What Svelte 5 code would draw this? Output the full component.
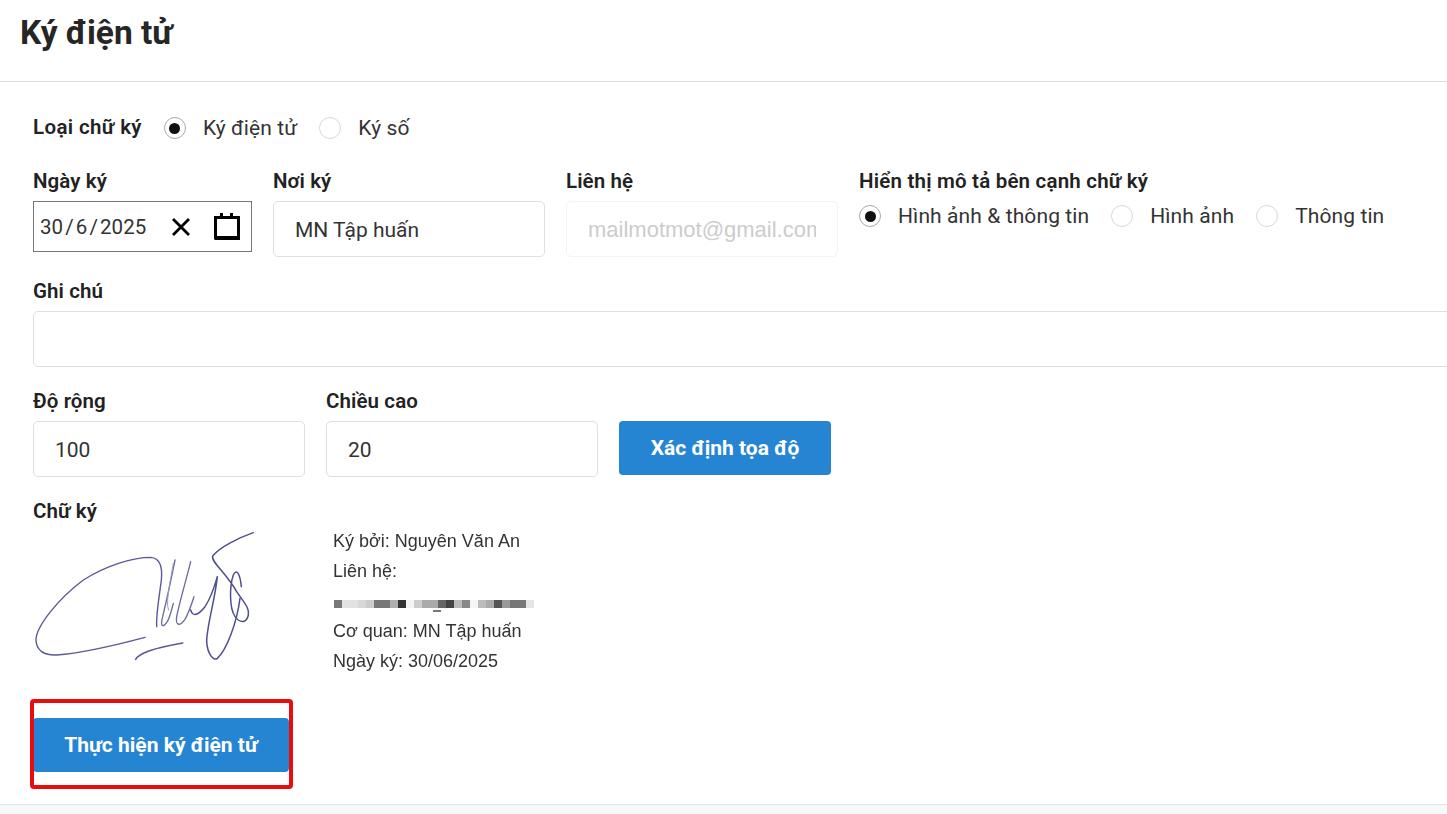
<script>
  const displayOptions = [
    { label: 'Hình ảnh & thông tin', checked: true },
    { label: 'Hình ảnh', checked: false },
    { label: 'Thông tin', checked: false }
  ]
  const signTypes = [
    { label: 'Ký điện tử', checked: true },
    { label: 'Ký số', checked: false }
  ]
  // blurred e-mail line, one entry per mosaic block
  const mosaic = [
    [8, '#777'], [16, '#e2e2e2'], [8, '#d8d8d8'], [8, '#ccc'], [16, '#777'], [8, '#b0b0b0'],
    [8, '#333'], [8, '#f4f4f4'], [8, '#ccc'], [16, '#aaa'], [8, '#666'], [8, '#444'],
    [8, '#bbb'], [8, '#888'], [8, '#f5f5f5'], [8, '#bbb'], [8, '#aaa'], [8, '#555'],
    [8, '#999'], [16, '#777'], [8, '#e5e5e5']
  ]
</script>

<div class="page">
  <header class="head">
    <h1>Ký điện tử</h1>
  </header>

  <main class="form">
    <div class="type-row">
      <span class="label">Loại chữ ký</span>
      <div class="radios">
        {#each signTypes as r}
          <span class="radio-item">
            <span class="radio" class:on={r.checked}></span>
            <span>{r.label}</span>
          </span>
        {/each}
      </div>
    </div>

    <div class="row first">
      <div class="field date-field">
        <span class="label">Ngày ký</span>
        <div class="date">
          <span class="date-text">30<i>/</i>6<i>/</i>2025</span>
          <svg class="clear" width="20" height="20" viewBox="0 0 20 20">
            <path d="M2 2 L18 18 M18 2 L2 18" stroke="#000" stroke-width="2.8" fill="none" />
          </svg>
          <svg class="cal" width="26" height="27" viewBox="0 0 26 27">
            <path d="M1.5 4.5 H24.5 V25 H1.5 Z" stroke="#000" stroke-width="3" fill="none" />
            <path d="M1 23 H26 V27 H1 Z" fill="#000" />
            <path d="M6 0 H9 V4 H6 Z M16 0 H19 V4 H16 Z" fill="#000" />
          </svg>
        </div>
      </div>
      <div class="field">
        <span class="label">Nơi ký</span>
        <input class="input" value="MN Tập huấn" />
      </div>
      <div class="field">
        <span class="label">Liên hệ</span>
        <input class="input mail" value="mailmotmot@gmail.com" disabled />
      </div>
      <div class="field">
        <span class="label show-label">Hiển thị mô tả bên cạnh chữ ký</span>
        <div class="radios wide">
          {#each displayOptions as r}
            <span class="radio-item">
              <span class="radio" class:on={r.checked}></span>
              <span>{r.label}</span>
            </span>
          {/each}
        </div>
      </div>
    </div>

    <div class="field note">
      <span class="label">Ghi chú</span>
      <input class="input" />
    </div>

    <div class="row size">
      <div class="field">
        <span class="label">Độ rộng</span>
        <input class="input" value="100" />
      </div>
      <div class="field">
        <span class="label">Chiều cao</span>
        <input class="input" value="20" />
      </div>
      <button class="btn locate">Xác định tọa độ</button>
    </div>

    <div class="sign">
      <div class="sign-img">
        <span class="label">Chữ ký</span>
        <svg width="260" height="150" viewBox="0 0 780 450" fill="none" stroke="#5a5a98" stroke-width="4.2" stroke-linecap="round" stroke-linejoin="round">
          <path d="M375 352 C300 372 200 398 110 405 C70 407 48 390 48 358 C50 320 110 240 190 180 C260 135 340 112 392 112 C420 114 428 140 424 180 C418 230 408 280 410 320" />
          <path d="M465 120 C455 170 440 240 428 290 C420 320 428 325 442 305 C450 290 455 270 460 250" stroke-width="4" stroke="#6a6aa0" />
          <path d="M460 130 C450 190 436 250 446 270" stroke-width="3" stroke="#9a9abf" />
          <path d="M512 125 C500 175 480 240 470 290 C466 320 480 318 495 298 C510 270 515 250 522 230" stroke-width="4" stroke="#6a6aa0" />
          <path d="M512 270 C518 292 535 285 555 260 C572 235 585 195 592 170 C585 240 560 320 560 365 C562 400 580 425 592 415 C620 390 650 310 660 235" stroke-width="4.5" stroke="#4f4f92" />
          <path d="M700 38 C660 52 600 80 578 108 C572 125 620 160 650 215 C670 245 690 265 685 285 C680 310 660 310 645 290 C628 265 628 200 640 165 C650 145 660 160 664 200" stroke-width="4.5" stroke="#4f4f92" />
          <path d="M347 418 C358 398 400 385 488 369" stroke-width="5" />
        </svg>
      </div>
      <div class="sign-info">
        <div>Ký bởi: Nguyên Văn An</div>
        <div>Liên hệ:</div>
        <div class="mosaic">
          {#each mosaic as [w, c]}
            <span style="width:{w}px;background:{c}"></span>
          {/each}
        </div>
        <div>Cơ quan: MN Tập huấn</div>
        <div>Ngày ký: 30/06/2025</div>
      </div>
    </div>

    <div class="submit">
      <button class="btn do-sign">Thực hiện ký điện tử</button>
      <span class="mark"></span>
    </div>
  </main>

  <div class="foot"></div>
</div>

<style>
  :global(body) {
    margin: 0;
    background: #fff;
    overflow: hidden;
  }
  .page {
    width: 1447px;
    height: 814px;
    overflow: hidden;
    font-family: Roboto, "Noto Sans", sans-serif;
    color: #222;
    display: flex;
    flex-direction: column;
  }
  .head {
    height: 81px;
    border-bottom: 1px solid #dcdfe3;
    padding: 0 20px;
    flex: none;
  }
  h1 {
    margin: 0;
    padding-top: 13px;
    font-size: 33.5px;
    line-height: 40px;
    font-weight: 700;
    color: #262626;
  }
  .form {
    padding: 0 0 0 33px;
    height: 722px;
    flex: none;
  }
  .label {
    display: block;
    font-size: 20.5px;
    line-height: 20px;
    font-weight: 600;
    color: #222;
    letter-spacing: 0.1px;
  }
  .type-row {
    display: flex;
    align-items: center;
    gap: 22px;
    padding-top: 35px;
    height: 22px;
  }
  .type-row .label {
    letter-spacing: 0.37px;
    margin-top: -2px;
  }
  .show-label {
    letter-spacing: 0.2px;
  }
  .radios {
    display: flex;
    gap: 22px;
    font-size: 21px;
    line-height: 22px;
    color: #333;
    letter-spacing: 0.1px;
  }
  .radio-item {
    display: flex;
    align-items: center;
    gap: 17px;
  }
  .radio {
    width: 22px;
    height: 22px;
    box-sizing: border-box;
    border: 1px solid #d9d9d9;
    border-radius: 50%;
    display: flex;
    align-items: center;
    justify-content: center;
  }
  .radio.on {
    border-color: #aaa;
  }
  .radio.on::after {
    content: '';
    width: 11px;
    height: 11px;
    border-radius: 50%;
    background: #111;
  }
  .row {
    display: flex;
    gap: 21px;
  }
  .first {
    margin-top: 32px;
  }
  .field {
    display: flex;
    flex-direction: column;
    gap: 10px;
  }
  .input {
    box-sizing: border-box;
    width: 272px;
    height: 56px;
    border: 1px solid #dcdfe3;
    border-radius: 5px;
    padding: 1px 21px 0;
    font: 21px Roboto, sans-serif;
    color: #333;
    background: #fff;
    outline: none;
  }
  .mail {
    font-family: "Liberation Sans", sans-serif;
    font-size: 22px;
    color: #ccc;
    border-color: #f3f3f3;
    opacity: 1;
  }
  .date {
    box-sizing: border-box;
    width: 219px;
    height: 51px;
    border: 1px solid #767676;
    display: flex;
    align-items: center;
    padding-left: 6px;
    font-size: 20.5px;
    color: #333;
  }
  .date-text {
    width: 131px;
    letter-spacing: 0.1px;
  }
  .date-text i {
    font-style: normal;
    padding: 0 2px;
  }
  .cal {
    margin-left: 23px;
  }
  .wide {
    margin-top: 4px;
  }
  .note {
    margin-top: 24px;
  }
  .note .input {
    width: 1500px;
  }
  .size {
    margin-top: 24px;
    align-items: flex-end;
  }
  .btn {
    border: none;
    border-radius: 4px;
    background: #2585d3;
    color: #fff;
    font: 700 21px Roboto, sans-serif;
    height: 54px;
    padding: 0;
  }
  .locate {
    width: 212px;
    margin-bottom: 2px;
  }
  .sign {
    display: flex;
    margin-top: 24px;
  }
  .sign-img {
    width: 300px;
  }
  .sign-img svg {
    display: block;
    margin: -1px 0 0 -13px;
    filter: blur(0.35px);
  }
  .sign-info {
    font-family: "Liberation Sans", sans-serif;
    font-size: 18px;
    line-height: 30px;
    color: #333;
    padding-top: 25px;
    filter: blur(0.3px);
  }
  .mosaic {
    display: flex;
    height: 30px;
    box-sizing: border-box;
    padding: 6px 0 0 1px;
    align-items: center;
    position: relative;
  }
  .mosaic span {
    height: 8px;
    display: block;
  }
  .mosaic::after {
    content: '';
    position: absolute;
    left: 100px;
    top: 24px;
    width: 8px;
    height: 2px;
    background: #777;
  }
  .submit {
    position: relative;
    width: 256px;
    margin-top: 42px;
  }
  .do-sign {
    width: 256px;
    display: block;
  }
  .mark {
    position: absolute;
    left: -3px;
    top: -19px;
    width: 263px;
    height: 90px;
    box-sizing: border-box;
    border: 4px solid #e80c0c;
    border-radius: 4px;
  }
  .foot {
    flex: 1;
    background: #f6f8fb;
    border-top: 1px solid #dfe3ea;
  }
</style>
